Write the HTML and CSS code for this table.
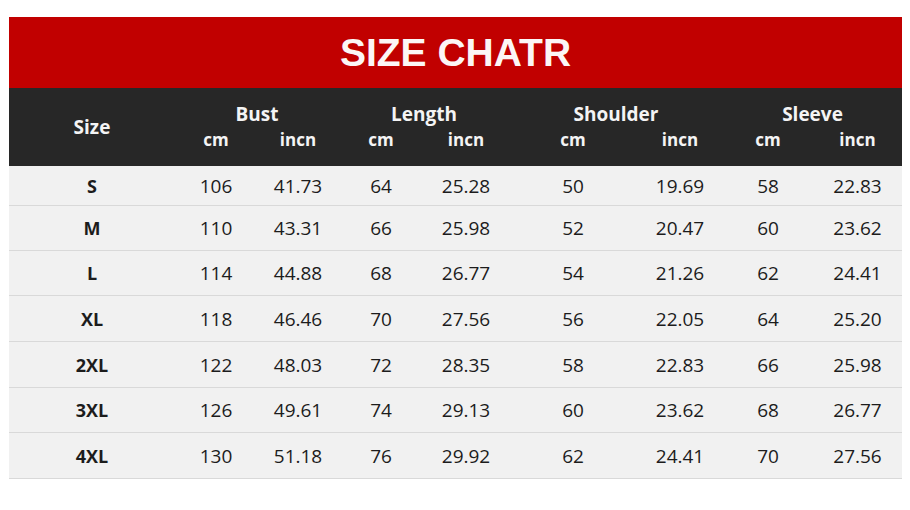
FILE: index.html
```html
<!DOCTYPE html>
<html>
<head>
<meta charset="utf-8">
<link rel="stylesheet" href="styles.css">
</head>
<body>
<div class="chart">
  <div class="title">SIZE CHATR</div>
  <div class="head">
    <div class="h-size">Size</div>
    <div class="group g-bust">Bust</div>
    <div class="group g-length">Length</div>
    <div class="group g-shoulder">Shoulder</div>
    <div class="group g-sleeve">Sleeve</div>
    <div class="unit">cm</div><div class="unit">incn</div>
    <div class="unit">cm</div><div class="unit">incn</div>
    <div class="unit">cm</div><div class="unit">incn</div>
    <div class="unit">cm</div><div class="unit">incn</div>
  </div>
  <div class="row first"><div class="sz">S</div><div>106</div><div>41.73</div><div>64</div><div>25.28</div><div>50</div><div>19.69</div><div>58</div><div>22.83</div></div>
  <div class="row h45"><div class="sz">M</div><div>110</div><div>43.31</div><div>66</div><div>25.98</div><div>52</div><div>20.47</div><div>60</div><div>23.62</div></div>
  <div class="row h45"><div class="sz">L</div><div>114</div><div>44.88</div><div>68</div><div>26.77</div><div>54</div><div>21.26</div><div>62</div><div>24.41</div></div>
  <div class="row h46"><div class="sz">XL</div><div>118</div><div>46.46</div><div>70</div><div>27.56</div><div>56</div><div>22.05</div><div>64</div><div>25.20</div></div>
  <div class="row h46"><div class="sz">2XL</div><div>122</div><div>48.03</div><div>72</div><div>28.35</div><div>58</div><div>22.83</div><div>66</div><div>25.98</div></div>
  <div class="row h45"><div class="sz">3XL</div><div>126</div><div>49.61</div><div>74</div><div>29.13</div><div>60</div><div>23.62</div><div>68</div><div>26.77</div></div>
  <div class="row h46"><div class="sz">4XL</div><div>130</div><div>51.18</div><div>76</div><div>29.92</div><div>62</div><div>24.41</div><div>70</div><div>27.56</div></div>
</div>
</body>
</html>
```
FILE: styles.css
```css
html, body {
  margin: 0;
  padding: 0;
  background: #ffffff;
}
body {
  padding: 17px 8px 0 9px;
  font-family: "Open Sans", "Noto Sans", sans-serif;
}
.chart {
  width: 893px;
}
.title {
  height: 71px;
  background: #c10000;
  color: #fcf6f6;
  font-family: "Liberation Sans", Arial, sans-serif;
  font-weight: bold;
  font-size: 39px;
  line-height: 71px;
  text-align: center;
}
.head,
.row {
  display: grid;
  grid-template-columns: 166px 82px 82px 84px 86px 128px 86px 90px 89px;
}
.head {
  background: #272727;
  color: #f4f4f4;
  font-weight: bold;
  padding: 13px 0;
  grid-template-rows: 26px 26px;
  height: 52px;
}
.head > div {
  text-align: center;
}
.h-size {
  grid-row: 1 / 3;
  grid-column: 1;
  align-self: center;
  font-size: 19px;
  line-height: 26px;
}
.group {
  grid-row: 1;
  grid-column: span 2;
  font-size: 19px;
  line-height: 26px;
}
.g-bust { grid-column: 2 / 4; }
.g-length { grid-column: 4 / 6; }
.g-shoulder { grid-column: 6 / 8; }
.g-sleeve { grid-column: 8 / 10; }
.unit {
  grid-row: 2;
  font-size: 17px;
  line-height: 26px;
}
.row {
  background: #f1f1f1;
  border-bottom: 1px solid #d9d9d9;
  color: #1c1c1c;
  font-size: 19px;
  box-sizing: border-box;
  align-items: center;
}
.row > div {
  text-align: center;
}
.row .sz {
  font-weight: bold;
  font-size: 18px;
}
.first { height: 40px; }
.h45 { height: 45px; }
.h46 { height: 46px; }
```
